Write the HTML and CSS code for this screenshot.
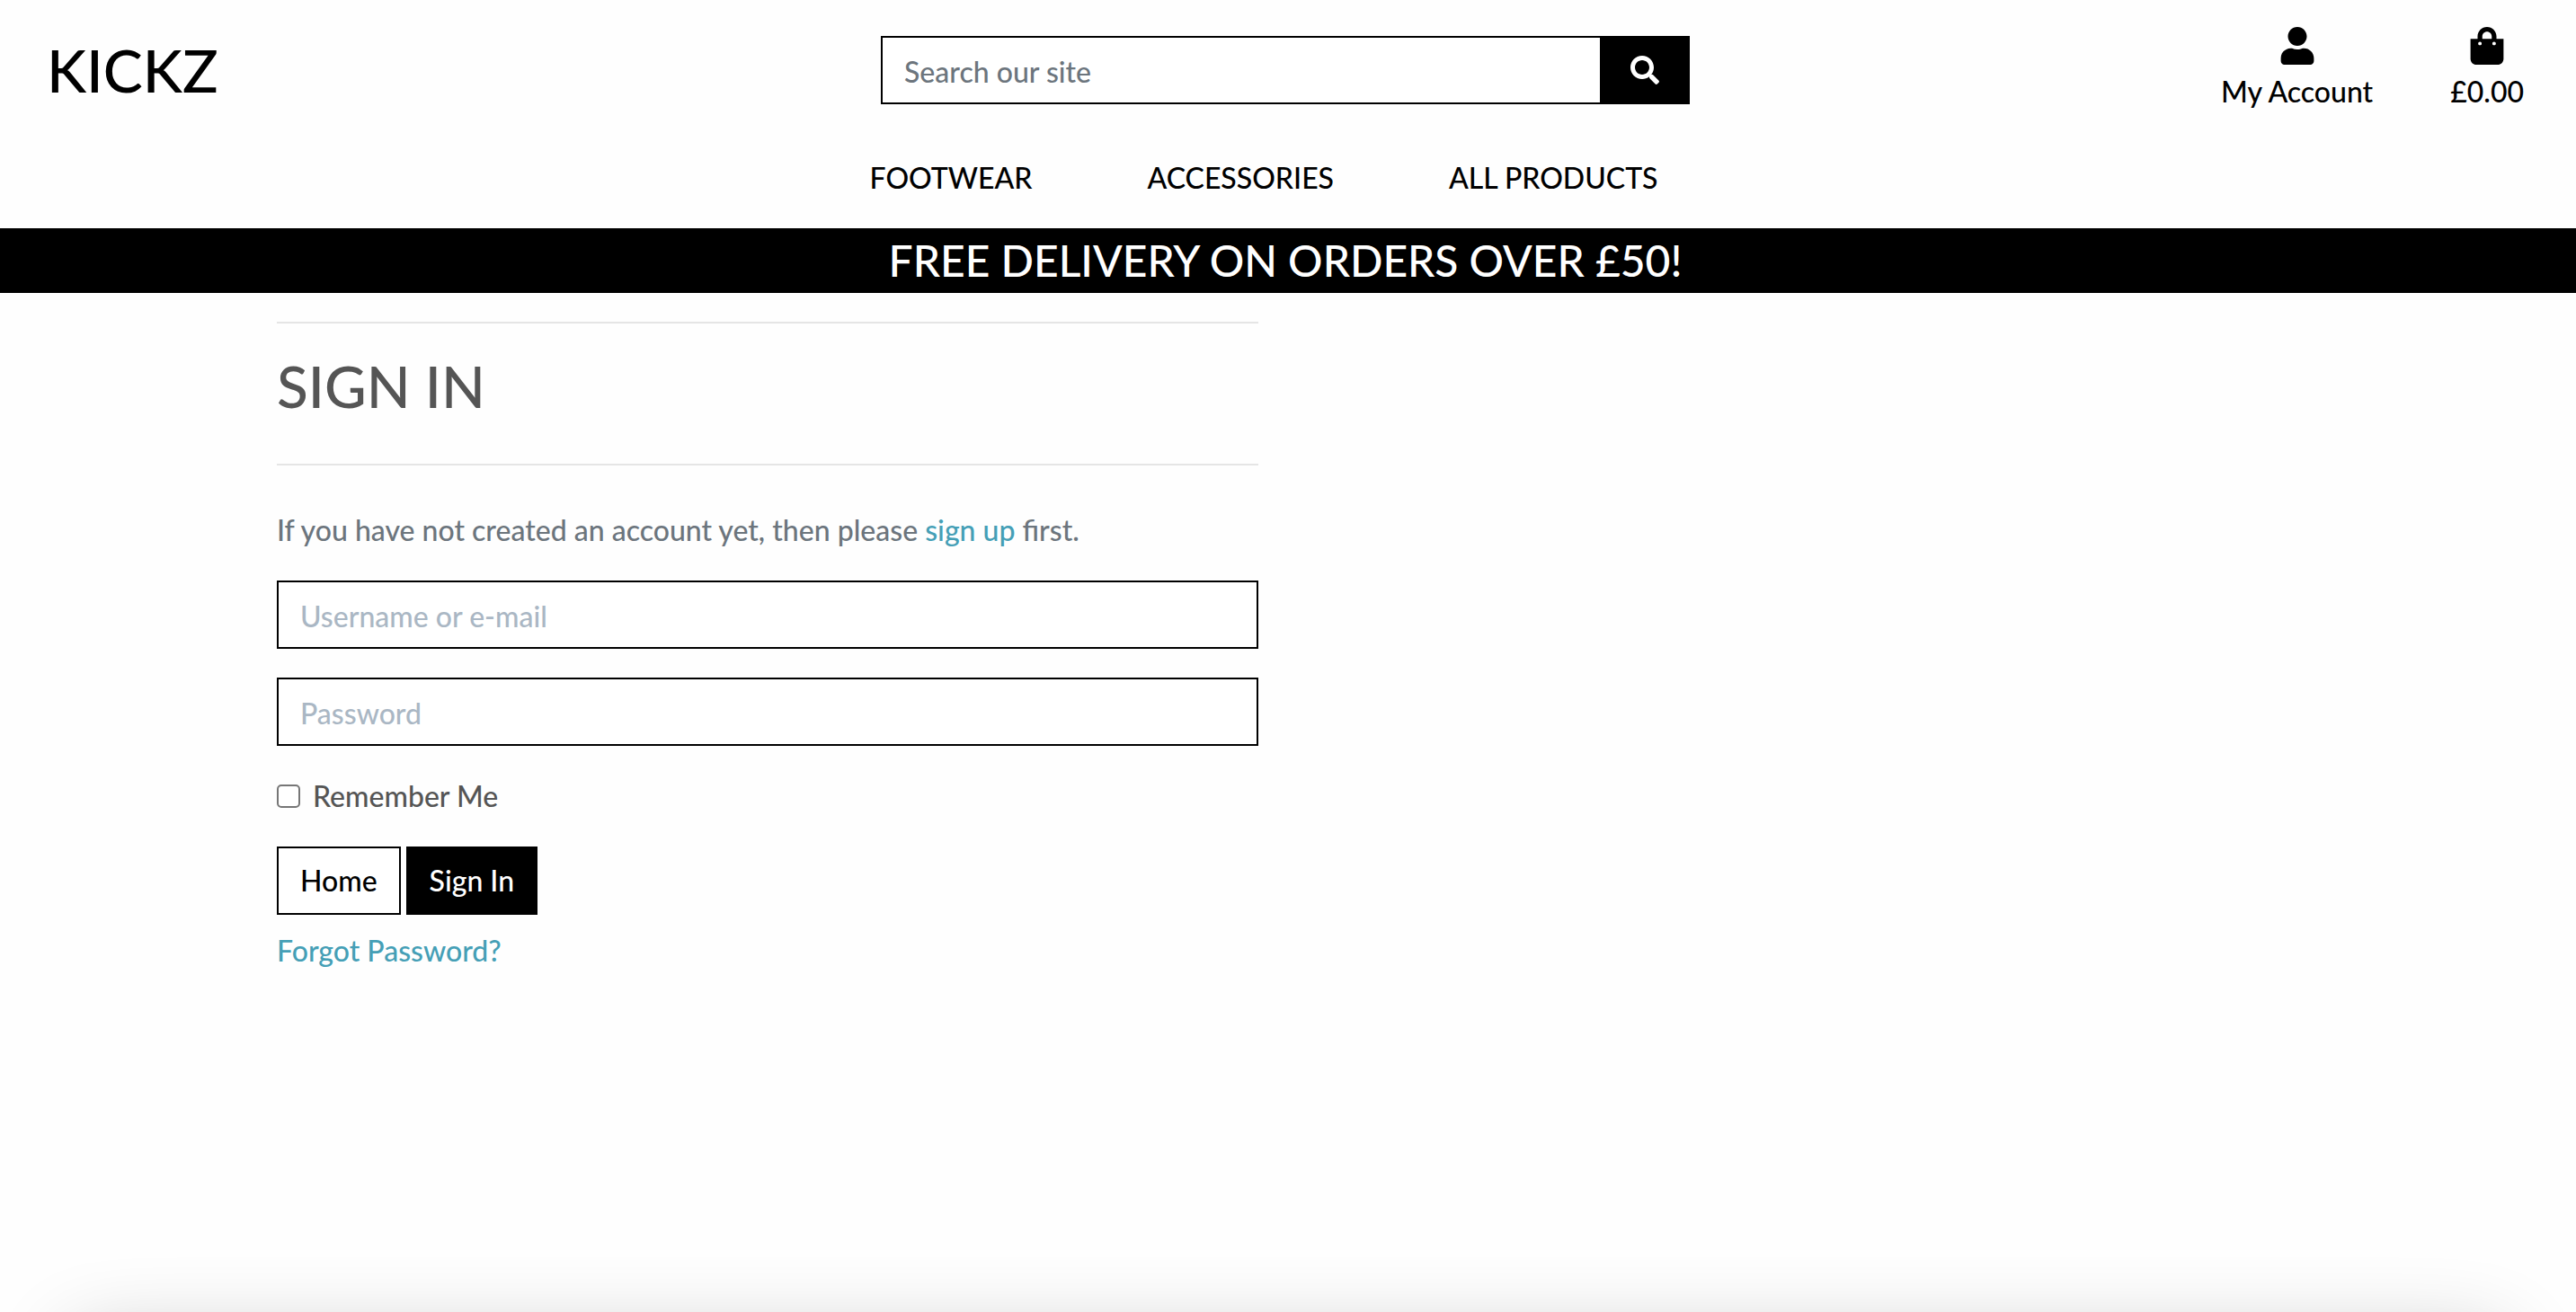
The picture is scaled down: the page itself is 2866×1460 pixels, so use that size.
FILE: index.html
```html
<!DOCTYPE html>
<html lang="en">
<head>
<meta charset="utf-8">
<title>Kickz</title>
<meta name="viewport" content="width=device-width, initial-scale=1">
<link rel="stylesheet" href="styles.css">
</head>
<body>
<header class="site-header">
  <a class="logo" href="#">KICKZ</a>
  <form class="search" role="search">
    <input class="field search-field" type="text" placeholder="Search our site" aria-label="Search our site">
    <button class="search-button" type="button" aria-label="Search">
      <svg class="icon-search" viewBox="0 0 512 512" aria-hidden="true"><path fill="currentColor" d="M505 442.7L405.3 343c-4.5-4.5-10.6-7-17-7H372c27.6-35.3 44-79.7 44-128C416 93.1 322.9 0 208 0S0 93.1 0 208s93.1 208 208 208c48.3 0 92.7-16.4 128-44v16.3c0 6.4 2.5 12.5 7 17l99.7 99.7c9.4 9.4 24.6 9.4 33.9 0l28.3-28.3c9.4-9.4 9.4-24.6.1-34zM208 336c-70.7 0-128-57.2-128-128 0-70.7 57.2-128 128-128 70.7 0 128 57.2 128 128 0 70.7-57.2 128-128 128z"/></svg>
    </button>
  </form>
  <div class="account-links">
    <a class="account-link" href="#">
      <svg class="icon-account" viewBox="0 0 448 512" aria-hidden="true"><path fill="currentColor" d="M224 256c70.7 0 128-57.3 128-128S294.7 0 224 0 96 57.3 96 128s57.3 128 128 128zm89.6 32h-16.7c-22.2 10.2-46.9 16-72.9 16s-50.6-5.8-72.9-16h-16.7C60.2 288 0 348.2 0 422.4V464c0 26.5 21.5 48 48 48h352c26.5 0 48-21.5 48-48v-41.6c0-74.2-60.2-134.4-134.4-134.4z"/></svg>
      <span>My Account</span>
    </a>
    <a class="account-link" href="#">
      <svg class="icon-account" viewBox="0 0 448 512" aria-hidden="true"><path fill="currentColor" d="M352 160v-32C352 57.42 294.579 0 224 0 153.42 0 96 57.42 96 128v32H0v272c0 44.183 35.817 80 80 80h288c44.183 0 80-35.817 80-80V160h-96zm-192-32c0-35.29 28.71-64 64-64s64 28.71 64 64v32H160v-32zm160 120c-13.255 0-24-10.745-24-24s10.745-24 24-24 24 10.745 24 24-10.745 24-24 24zm-192 0c-13.255 0-24-10.745-24-24s10.745-24 24-24 24 10.745 24 24-10.745 24-24 24z"/></svg>
      <span>£0.00</span>
    </a>
  </div>
  <nav class="main-nav" aria-label="Main">
    <a class="nav-link" href="#">FOOTWEAR</a>
    <a class="nav-link" href="#">ACCESSORIES</a>
    <a class="nav-link" href="#">ALL PRODUCTS</a>
  </nav>
</header>
<div class="banner"><h4 class="banner-text">FREE DELIVERY ON ORDERS OVER £50!</h4></div>
<main class="content">
  <section class="sign-in">
    <hr class="rule">
    <h2 class="title">SIGN IN</h2>
    <hr class="rule">
    <p class="intro">If you have not created an account yet, then please <a class="link" href="#">sign up</a> first.</p>
    <form class="sign-in-form">
      <input class="field" type="text" placeholder="Username or e-mail" aria-label="Username or e-mail">
      <input class="field" type="password" placeholder="Password" aria-label="Password">
      <div class="remember">
        <input class="checkbox" type="checkbox" id="remember">
        <label for="remember">Remember Me</label>
      </div>
      <div class="form-footer">
        <div class="actions">
          <a class="button" href="#">Home</a>
          <button class="button button-dark" type="button">Sign In</button>
        </div>
        <a class="link" href="#">Forgot Password?</a>
      </div>
    </form>
  </section>
</main>
<div class="edge-shade" aria-hidden="true"></div>
</body>
</html>
```
FILE: styles.css
```css
* { box-sizing: border-box; }
body {
  margin: 0;
  background: #fefefe;
  color: #555;
  font: 500 32px/48px Lato, sans-serif;
  text-rendering: optimizeLegibility;
}
a { color: inherit; text-decoration: none; }

.site-header {
  display: grid;
  grid-template-columns: 1fr 900px 1fr;
  align-items: center;
  padding: 30px 58px 0 52px;
  color: #000;
}
.logo { font-size: 66px; line-height: 76px; }
.search { display: flex; }
.field {
  width: 100%;
  height: 76px;
  padding: 2px 24px 0;
  border: 2px solid #000;
  border-radius: 0;
  background: #fff;
  color: #000;
  font: inherit;
}
.field::placeholder { color: #aab7c4; opacity: 1; }
.search-field { border-right: 0; }
.search-field::placeholder { color: #6c757d; }
.search-button {
  flex: 0 0 100px;
  display: flex;
  align-items: center;
  justify-content: center;
  border: 0;
  background: #000;
  color: #fff;
}
.icon-search { width: 32px; height: 32px; }
.account-links { display: flex; justify-content: flex-end; gap: 86px; }
.account-link { display: flex; flex-direction: column; align-items: center; gap: 6px; }
.icon-account { width: 38px; height: 42px; }
.main-nav { grid-column: 1 / -1; display: flex; justify-content: center; padding: 48px 0 32px; }
.nav-link { margin-right: 48px; padding: 0 40px; }

.banner { padding: 7px 58px 7px 52px; background: #000; color: #fff; text-align: center; }
.banner-text { margin: 0; font-size: 48px; line-height: 58px; font-weight: 500; }

.content {
  display: grid;
  grid-template-columns: 1fr 1fr;
  gap: 66px;
  max-width: 2250px;
  margin: 0 auto;
  padding: 32px 0;
}
.rule { margin: 0; border: 0; border-top: 2px solid #e5e5e5; }
.title { margin: 0; padding: 32px 0 48px; font-size: 64px; line-height: 76px; font-weight: 500; }
.intro { margin: 0; padding: 48px 0 32px; color: #6c757d; }
.link { color: #459fb6; }
.sign-in-form { display: flex; flex-direction: column; gap: 32px; }
.remember { display: flex; align-items: center; gap: 14px; }
.checkbox {
  appearance: none;
  width: 26px;
  height: 26px;
  margin: 0;
  border: 2px solid #767676;
  border-radius: 5px;
  background: #fff;
}
.checkbox:checked { background: #767676; }
.form-footer { display: flex; flex-direction: column; align-items: flex-start; gap: 16px; }
.actions { display: flex; gap: 6px; }
.button {
  height: 76px;
  padding: 12px 24px;
  border: 2px solid #000;
  background: #fff;
  color: #000;
  font: inherit;
}
.button-dark { background: #000; color: #fff; }

/* soft shade that rises from the bottom edge of the window */
.edge-shade {
  position: fixed;
  right: 120px;
  bottom: -20px;
  left: 120px;
  height: 10px;
  border-radius: 10px;
  box-shadow: 0 60px 90px 40px rgba(0, 0, 0, 0.24);
  pointer-events: none;
}
```
